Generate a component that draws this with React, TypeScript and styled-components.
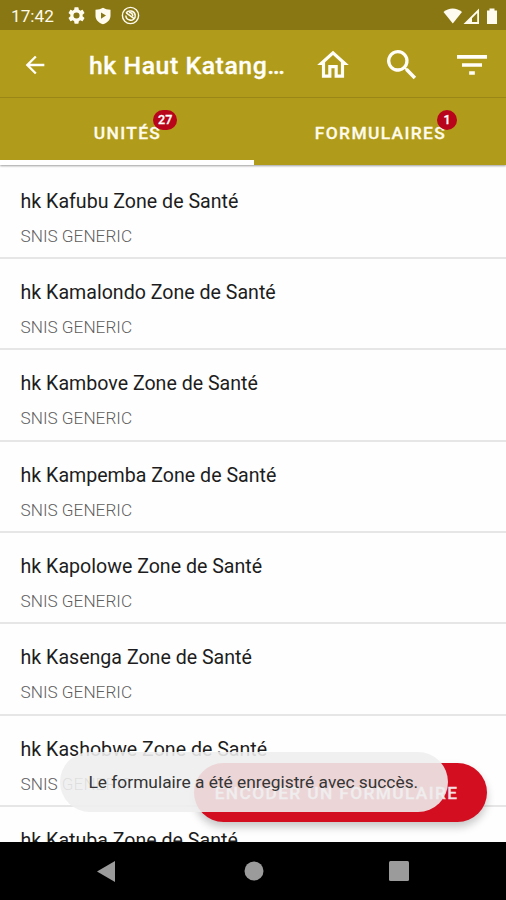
import React from "react";
import styled, { createGlobalStyle } from "styled-components";

const GlobalStyle = createGlobalStyle`
  * { box-sizing: border-box; }
  html, body { margin: 0; padding: 0; background: #fff; overflow: hidden; }
  body { font-family: Roboto, "Liberation Sans", sans-serif; }
`;

const Screen = styled.div`
  position: relative;
  display: flex;
  flex-direction: column;
  width: 506px;
  height: 900px;
  overflow: hidden;
  background: #fefefe;
`;

const StatusBar = styled.header`
  display: flex;
  align-items: center;
  flex: none;
  height: 30px;
  padding: 1px 7px 0 11px;
  background: #887713;
  color: #fffbee;
`;

const Clock = styled.span`
  width: 57px;
  font-size: 17.2px;
  line-height: 30px;
`;

const Notifications = styled.div`
  display: flex;
  align-items: center;
  gap: 9px;
`;

const Signals = styled.div`
  display: flex;
  align-items: center;
  margin-left: auto;
`;

const Glyph = styled.svg`
  display: block;
  flex: none;
`;

const Toolbar = styled.div`
  display: flex;
  align-items: center;
  flex: none;
  height: 68px;
  padding: 0 14px 0 21px;
  background: #b19b1a;
  border-bottom: 1px solid #9f8a17;
  color: #fffef8;
`;

const IconButton = styled.button<{ $gap?: number }>`
  display: flex;
  padding: 0;
  margin: 2px 0 0 ${(p) => p.$gap ?? 0}px;
  border: 0;
  background: none;
  color: inherit;
`;

const Title = styled.h1`
  width: 206px;
  margin: 4px 0 0 40px;
  font-size: 24.8px;
  font-weight: 500;
  letter-spacing: 0.55px;
  line-height: 32px;
  white-space: nowrap;
  -webkit-text-stroke: 0.3px currentColor;
`;

const Tabs = styled.nav`
  position: relative;
  z-index: 1;
  display: grid;
  grid-template-columns: 254px 1fr;
  flex: none;
  height: 67px;
  background: #b19b1a;
  box-shadow: 0 1px 2px rgba(0, 0, 0, 0.38);
`;

const Tab = styled.div<{ $active?: boolean }>`
  display: flex;
  align-items: center;
  justify-content: center;
  padding: ${(p) => (p.$active ? 7 : 2)}px 0 0 1px;
  border-bottom: ${(p) => (p.$active ? "5px solid #fff" : "0")};
  color: #fffbea;
  font-size: 17.4px;
  font-weight: 500;
  letter-spacing: 1.35px;
  -webkit-text-stroke: 0.3px currentColor;
`;

const TabLabel = styled.span`
  position: relative;
`;

const Badge = styled.span<{ $width: number }>`
  position: absolute;
  right: ${(p) => (p.$width > 20 ? -16 : -11)}px;
  top: -13px;
  width: ${(p) => p.$width}px;
  height: 20px;
  border-radius: 10px;
  background: #b8051c;
  color: #fff;
  font-size: 12.5px;
  line-height: 20px;
  letter-spacing: 0;
  text-align: center;
`;

const List = styled.main`
  flex: 1;
  min-height: 0;
  overflow: hidden;
  padding-top: 2.5px;
`;

const Row = styled.article`
  height: 91.4px;
  padding: 20px 20px 0 20.5px;
  border-bottom: 2px solid #e6e6e6;
`;

const Name = styled.div`
  color: #1d1d1d;
  font-size: 19.6px;
  line-height: 28px;
  white-space: nowrap;
`;

const Kind = styled.div`
  margin-top: 7px;
  color: #5f5f5f;
  font-size: 17.2px;
  font-weight: 300;
  line-height: 26px;
`;

const NavBar = styled.footer`
  display: flex;
  align-items: center;
  flex: none;
  height: 58px;
  padding: 0 97px;
  background: #000;
  color: #9b9b9b;
`;

const NavGlyph = styled(Glyph)<{ $gap?: number }>`
  margin-left: ${(p) => p.$gap ?? 0}px;
`;

const EncodeButton = styled.button`
  position: absolute;
  left: 194px;
  top: 763px;
  width: 293px;
  height: 59px;
  padding: 0 8px 0 0;
  border: 0;
  border-radius: 30px;
  background: #d30e20;
  color: #f4dfe1;
  box-shadow: 0 5px 9px rgba(0, 0, 0, 0.22);
  font: 500 17.35px Roboto, sans-serif;
  letter-spacing: 1.35px;
  white-space: nowrap;
  -webkit-text-stroke: 0.3px currentColor;
`;

const Toast = styled.div`
  position: absolute;
  left: 60px;
  top: 752px;
  width: 388px;
  height: 60px;
  padding-left: 28.5px;
  border-radius: 30px;
  background: rgba(238, 238, 238, 0.89);
  color: #353535;
  font-size: 17.35px;
  line-height: 60px;
  white-space: nowrap;
`;

const units = ["Kafubu", "Kamalondo", "Kambove", "Kampemba", "Kapolowe", "Kasenga", "Kashobwe", "Katuba"];

export default function App() {
  return (
    <Screen>
      <GlobalStyle />
      <StatusBar>
        <Clock>17:42</Clock>
        <Notifications>
          <Glyph width="17" height="17" viewBox="2 2 20 20" fill="currentColor">
            <path d="M19.14 12.94c.04-.3.06-.61.06-.94s-.02-.64-.07-.94l2.03-1.58c.18-.14.23-.41.12-.61l-1.92-3.32c-.12-.22-.37-.29-.59-.22l-2.39.96c-.5-.38-1.03-.7-1.62-.94l-.36-2.54A.48.48 0 0 0 13.92 2.4h-3.84c-.24 0-.43.17-.47.41l-.36 2.54c-.59.24-1.13.57-1.62.94l-2.39-.96c-.22-.08-.47 0-.59.22L2.74 8.87c-.12.21-.08.47.12.61l2.03 1.58c-.05.3-.09.63-.09.94s.02.64.07.94l-2.03 1.58c-.18.14-.23.41-.12.61l1.92 3.32c.12.22.37.29.59.22l2.39-.96c.5.38 1.03.7 1.62.94l.36 2.54c.05.24.24.41.48.41h3.84c.24 0 .44-.17.47-.41l.36-2.54c.59-.24 1.13-.56 1.62-.94l2.39.96c.22.08.47 0 .59-.22l1.92-3.32c.12-.22.07-.47-.12-.61zM12 15.6a3.6 3.6 0 1 1 0-7.2 3.6 3.6 0 0 1 0 7.2z" />
          </Glyph>
          <Glyph width="18" height="18" viewBox="0 0 18 18" fill="currentColor" fillRule="evenodd">
            <path d="M9 .7C6.800 2 4.600 2.500 1.500 2.700v6c0 4 3.200 7.300 7.500 8.600 4.300-1.300 7.500-4.600 7.500-8.600v-6C13.400 2.500 11.200 2 9 .7zM7 5.400v6.400L12 8.600z" />
          </Glyph>
          <Glyph width="19" height="19" viewBox="0 0 19 19" fill="none" stroke="currentColor">
            <circle cx="9.500" cy="9.500" r="8.100" strokeWidth="1.400" />
            <path d="M5 6.900C7.500 3.600 13.400 4.500 14.200 9c.6 3.700-3 6-5.500 5" strokeWidth="1.500" />
            <path d="M5.200 6.900l8.300 6M8 6.500c2.200-.2 3.800 1.200 3.800 3.800M4.800 9.500c.2 2.600 2 4.400 4.400 4.500" strokeWidth="1.500" />
          </Glyph>
        </Notifications>
        <Signals>
          <Glyph width="56" height="18" viewBox="0 0 56 18" fill="currentColor">
            <path d="M.5 5C5.500.2 13.800.2 19 5L9.800 16.500z" />
            <path d="M36 1.500V17H20.500zM34.200 6L29 11.300V15h5.200z" fillRule="evenodd" />
            <path d="M46.500 1.500h5v2h2.500V17H44V3.500h2.500z" />
          </Glyph>
        </Signals>
      </StatusBar>

      <Toolbar>
        <IconButton aria-label="Retour">
          <Glyph width="28" height="28" viewBox="0 0 24 24" fill="currentColor">
            <path d="M20 11H7.830l5.590-5.590L12 4l-8 8 8 8 1.410-1.410L7.830 13H20z" />
          </Glyph>
        </IconButton>
        <Title>hk Haut Katang…</Title>
        <IconButton $gap={19} aria-label="Accueil">
          <Glyph width="38" height="38" viewBox="0 0 24 24" fill="currentColor">
            <path d="M12 5.690l5 4.500V18h-2v-6H9v6H7v-7.810zM12 3L2 12h3v8h6v-6h2v6h6v-8h3z" />
          </Glyph>
        </IconButton>
        <IconButton $gap={30} aria-label="Rechercher">
          <Glyph width="40" height="40" viewBox="0 0 24 24" fill="currentColor">
            <path d="M15.500 14h-.790l-.280-.270A6.500 6.500 0 1 0 13.730 14.430l.270.280v.790l5 4.990L20.490 19zM9.500 14a4.500 4.500 0 1 1 0-9 4.500 4.500 0 0 1 0 9z" />
          </Glyph>
        </IconButton>
        <IconButton $gap={30} aria-label="Filtrer">
          <Glyph width="40" height="40" viewBox="0 0 24 24" fill="currentColor">
            <path d="M10.300 17.900h3.400v-2.200h-3.400zM3 6v2.200h18V6zm3 7.100h12v-2.200H6z" />
          </Glyph>
        </IconButton>
      </Toolbar>

      <Tabs>
        <Tab $active>
          <TabLabel>UNITÉS<Badge $width={24}>27</Badge></TabLabel>
        </Tab>
        <Tab>
          <TabLabel>FORMULAIRES<Badge $width={20}>1</Badge></TabLabel>
        </Tab>
      </Tabs>

      <List>
        {units.map((unit) => (
          <Row key={unit}>
            <Name>hk {unit} Zone de Santé</Name>
            <Kind>SNIS GENERIC</Kind>
          </Row>
        ))}
      </List>

      <NavBar>
        <NavGlyph width="18" height="21" viewBox="0 0 18 21" fill="currentColor"><path d="M18 0v21L0 10.500z" /></NavGlyph>
        <NavGlyph $gap={129} width="20" height="20" viewBox="0 0 20 20" fill="currentColor"><circle cx="10" cy="10" r="9.500" /></NavGlyph>
        <NavGlyph $gap={125} width="20" height="20" viewBox="0 0 20 20" fill="currentColor"><rect width="20" height="20" rx="1.500" /></NavGlyph>
      </NavBar>

      <EncodeButton>ENCODER UN FORMULAIRE</EncodeButton>
      <Toast>Le formulaire a été enregistré avec succès.</Toast>
    </Screen>
  );
}
